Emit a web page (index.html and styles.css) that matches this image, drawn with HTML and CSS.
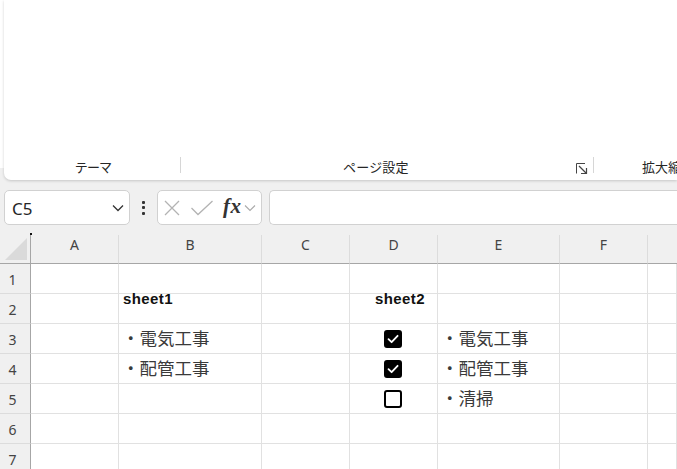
FILE: index.html
```html
<!DOCTYPE html>
<html lang="ja">
<head>
<meta charset="utf-8">
<title>Sheet</title>
<link rel="stylesheet" href="styles.css">
</head>
<body>
<div class="top">
  <div class="ribbon">
    <div class="ribbon-labels">
      <div class="grp grp-theme">テーマ</div>
      <div class="sep"></div>
      <div class="grp grp-page">
        <span class="grp-label">ページ設定</span>
        <svg class="launcher" width="12" height="11" viewBox="0 0 12 11">
          <path d="M0.5 10.5 V0.5 H9" fill="none" stroke="#444" stroke-width="1"/>
          <path d="M3 3 L10 10" fill="none" stroke="#444" stroke-width="1.2"/>
          <path d="M10.5 5 V10.5 H5" fill="none" stroke="#444" stroke-width="1.2"/>
        </svg>
      </div>
      <div class="sep"></div>
      <div class="grp grp-zoom">拡大縮小</div>
    </div>
  </div>
</div>

<div class="fbar">
  <div class="namebox">
    <span class="namebox-text">C5</span>
    <svg class="chev" width="12" height="8" viewBox="0 0 12 8"><path d="M1 1.5 L6 6.5 L11 1.5" fill="none" stroke="#333" stroke-width="1.3"/></svg>
  </div>
  <div class="dots"><i></i><i></i><i></i></div>
  <div class="fbtns">
    <svg width="18" height="18" viewBox="0 0 18 18"><path d="M2 2 L16 16 M16 2 L2 16" stroke="#b3b3b3" stroke-width="1.3" fill="none"/></svg>
    <svg class="ok" width="24" height="16" viewBox="0 0 24 16"><path d="M1.5 8 L8 14.5 L22.5 1" stroke="#b3b3b3" stroke-width="1.3" fill="none"/></svg>
    <span class="fx">fx</span>
    <svg class="chev-s" width="12" height="8" viewBox="0 0 12 8"><path d="M1 1.5 L6 6.5 L11 1.5" fill="none" stroke="#aaa" stroke-width="1.1"/></svg>
  </div>
  <div class="finput"></div>
</div>

<div class="sheet">
  <span class="cursor-mark"></span>
  <div class="cell corner"><span class="tri"></span></div>
  <div class="cell ch">A</div>
  <div class="cell ch">B</div>
  <div class="cell ch">C</div>
  <div class="cell ch">D</div>
  <div class="cell ch">E</div>
  <div class="cell ch">F</div>
  <div class="cell ch ch-last"></div>

  <div class="cell rh">1</div>
  <div class="cell"></div><div class="cell"></div><div class="cell"></div><div class="cell"></div><div class="cell"></div><div class="cell"></div><div class="cell"></div>

  <div class="cell rh">2</div>
  <div class="cell"></div>
  <div class="cell"><span class="title t1">sheet1</span></div>
  <div class="cell"></div>
  <div class="cell"><span class="title t2">sheet2</span></div>
  <div class="cell"></div><div class="cell"></div><div class="cell"></div>

  <div class="cell rh">3</div>
  <div class="cell"></div>
  <div class="cell jp">・電気工事</div>
  <div class="cell"></div>
  <div class="cell cb"><span class="box checked"><svg width="18" height="18" viewBox="0 0 18 18"><path d="M4.5 9.2 L7.6 12.2 L13.6 5.8" fill="none" stroke="#fff" stroke-width="1.8" stroke-linecap="round" stroke-linejoin="round"/></svg></span></div>
  <div class="cell jp">・電気工事</div>
  <div class="cell"></div><div class="cell"></div>

  <div class="cell rh">4</div>
  <div class="cell"></div>
  <div class="cell jp">・配管工事</div>
  <div class="cell"></div>
  <div class="cell cb"><span class="box checked"><svg width="18" height="18" viewBox="0 0 18 18"><path d="M4.5 9.2 L7.6 12.2 L13.6 5.8" fill="none" stroke="#fff" stroke-width="1.8" stroke-linecap="round" stroke-linejoin="round"/></svg></span></div>
  <div class="cell jp">・配管工事</div>
  <div class="cell"></div><div class="cell"></div>

  <div class="cell rh">5</div>
  <div class="cell"></div>
  <div class="cell"></div>
  <div class="cell"></div>
  <div class="cell cb"><span class="box"></span></div>
  <div class="cell jp">・清掃</div>
  <div class="cell"></div><div class="cell"></div>

  <div class="cell rh">6</div>
  <div class="cell"></div><div class="cell"></div><div class="cell"></div><div class="cell"></div><div class="cell"></div><div class="cell"></div><div class="cell"></div>

  <div class="cell rh">7</div>
  <div class="cell"></div><div class="cell"></div><div class="cell"></div><div class="cell"></div><div class="cell"></div><div class="cell"></div><div class="cell"></div>
</div>
</body>
</html>
```

FILE: styles.css
```css
* { box-sizing: border-box; }

html, body {
  margin: 0;
  padding: 0;
}

body {
  width: 677px;
  height: 469px;
  overflow: hidden;
  background: #f0f0f0;
  font-family: "Noto Sans", "Noto Sans CJK JP", sans-serif;
  color: #333;
}

/* ---------- ribbon ---------- */
.top {
  background: linear-gradient(#ffffff 0, #ffffff 168px, #f0f0f0 168px);
  height: 180px;
  position: relative;
  z-index: 2;
}

.ribbon {
  margin-left: 4px;
  height: 180px;
  background: #fff;
  border-bottom-left-radius: 7px;
  box-shadow: 0 1px 3px rgba(0, 0, 0, 0.18);
  display: flex;
  flex-direction: column;
  justify-content: flex-end;
  overflow: hidden;
}

.ribbon-labels {
  height: 26px;
  display: flex;
  align-items: center;
  font-family: "Noto Sans CJK JP", sans-serif;
  font-size: 13px;
  color: #262626;
  white-space: nowrap;
  padding-bottom: 2px;
}

.grp,
.sep {
  flex-shrink: 0;
}

.grp-theme {
  width: 176px;
  text-align: center;
  padding-left: 2px;
  letter-spacing: -0.8px;
}

.sep {
  width: 1px;
  height: 16px;
  background: #d6d6d6;
  align-self: flex-start;
  margin-top: 3px;
}

.grp-page {
  width: 412px;
  display: flex;
  align-items: center;
}

.grp-label {
  margin-left: 162px;
  letter-spacing: 0.2px;
}

.launcher {
  margin-left: auto;
  margin-right: 5px;
  margin-top: 4px;
}

.grp-zoom {
  padding-left: 48px;
}

/* ---------- formula bar ---------- */
.fbar {
  height: 55px;
  padding: 10px 0 0 4px;
  display: flex;
  align-items: flex-start;
  background: #f0f0f0;
}

.namebox,
.fbtns,
.finput {
  height: 35px;
  background: #fff;
  border: 1px solid #d1d1d1;
  border-radius: 5px;
}

.namebox {
  width: 126px;
  display: flex;
  align-items: center;
  padding: 0 4px 0 7px;
}

.namebox-text {
  font-family: "Noto Sans", sans-serif;
  font-size: 17px;
  color: #262626;
  flex: 1;
  padding-top: 1px;
}

.chev {
  margin-right: 1px;
}

.dots {
  width: 27px;
  height: 35px;
  display: flex;
  flex-direction: column;
  align-items: center;
  justify-content: center;
  gap: 2.5px;
}

.dots i {
  display: block;
  width: 3px;
  height: 3px;
  background: #333;
  border-radius: 1px;
}

.fbtns {
  width: 105px;
  display: flex;
  align-items: center;
  padding-left: 5px;
}

.fbtns .ok {
  margin-left: 9px;
}

.fx {
  font-family: "Liberation Serif", "DejaVu Serif", serif;
  font-style: italic;
  font-weight: bold;
  font-size: 21px;
  color: #333;
  margin-left: 9px;
  line-height: 20px;
  margin-top: -3px;
  letter-spacing: 0.5px;
}

.chev-s {
  margin-left: 2px;
}

.finput {
  flex: 1;
  margin-left: 7px;
  border-right: none;
  border-radius: 5px 0 0 5px;
}

/* ---------- sheet ---------- */
.sheet {
  position: relative;
  display: grid;
  grid-template-columns: 31px 88px 143px 88px 88px 122px 88px 1fr;
  grid-template-rows: 29px repeat(7, 30px);
  background: #fff;
}

.cursor-mark {
  position: absolute;
  left: 30px;
  top: -2px;
  width: 2px;
  height: 2px;
  background: #111;
  z-index: 3;
}

.cell {
  border-right: 1px solid #e1e1e1;
  border-bottom: 1px solid #e1e1e1;
  overflow: visible;
  white-space: nowrap;
  position: relative;
}

.corner {
  background: #f0f0f0;
  border-right: 1px solid #a6a6a6;
  border-bottom: 1px solid #a6a6a6;
}

.tri {
  position: absolute;
  left: 5px;
  top: 3px;
  width: 22px;
  height: 22px;
  background: #dadada;
  clip-path: polygon(100% 0, 100% 100%, 0 100%);
}

.ch {
  background: #f0f0f0;
  border-right: 1px solid #dcdcdc;
  border-bottom: 1px solid #a6a6a6;
  text-align: center;
  font-family: "Noto Sans", sans-serif;
  font-size: 14px;
  line-height: 20px;
  color: #444;
}

.ch-last {
  border-right: none;
}

.rh {
  background: #f0f0f0;
  border-right: 1px solid #a6a6a6;
  border-bottom: 1px solid #dcdcdc;
  text-align: center;
  padding-right: 5px;
  padding-top: 1px;
  font-family: "Noto Sans", sans-serif;
  font-size: 14px;
  line-height: 29px;
  color: #444;
}

.title {
  display: block;
  font-family: "Liberation Sans", Arial, sans-serif;
  font-weight: bold;
  font-size: 15px;
  letter-spacing: 0.4px;
  line-height: 10px;
  color: #111;
}

.t1 { padding-left: 4px; }
.t2 { padding-left: 25px; }

.jp {
  font-family: "Noto Sans CJK JP", sans-serif;
  font-size: 17.5px;
  line-height: 27px;
  padding-left: 3px;
  color: #3a3a3a;
}

.cb {
  display: flex;
  align-items: center;
  padding-left: 34px;
}

.box {
  width: 18px;
  height: 18px;
  border: 2px solid #000;
  border-radius: 3px;
  background: #fff;
  position: relative;
}

.box.checked {
  background: #000;
}

.box svg {
  position: absolute;
  left: -2px;
  top: -2px;
}
```
